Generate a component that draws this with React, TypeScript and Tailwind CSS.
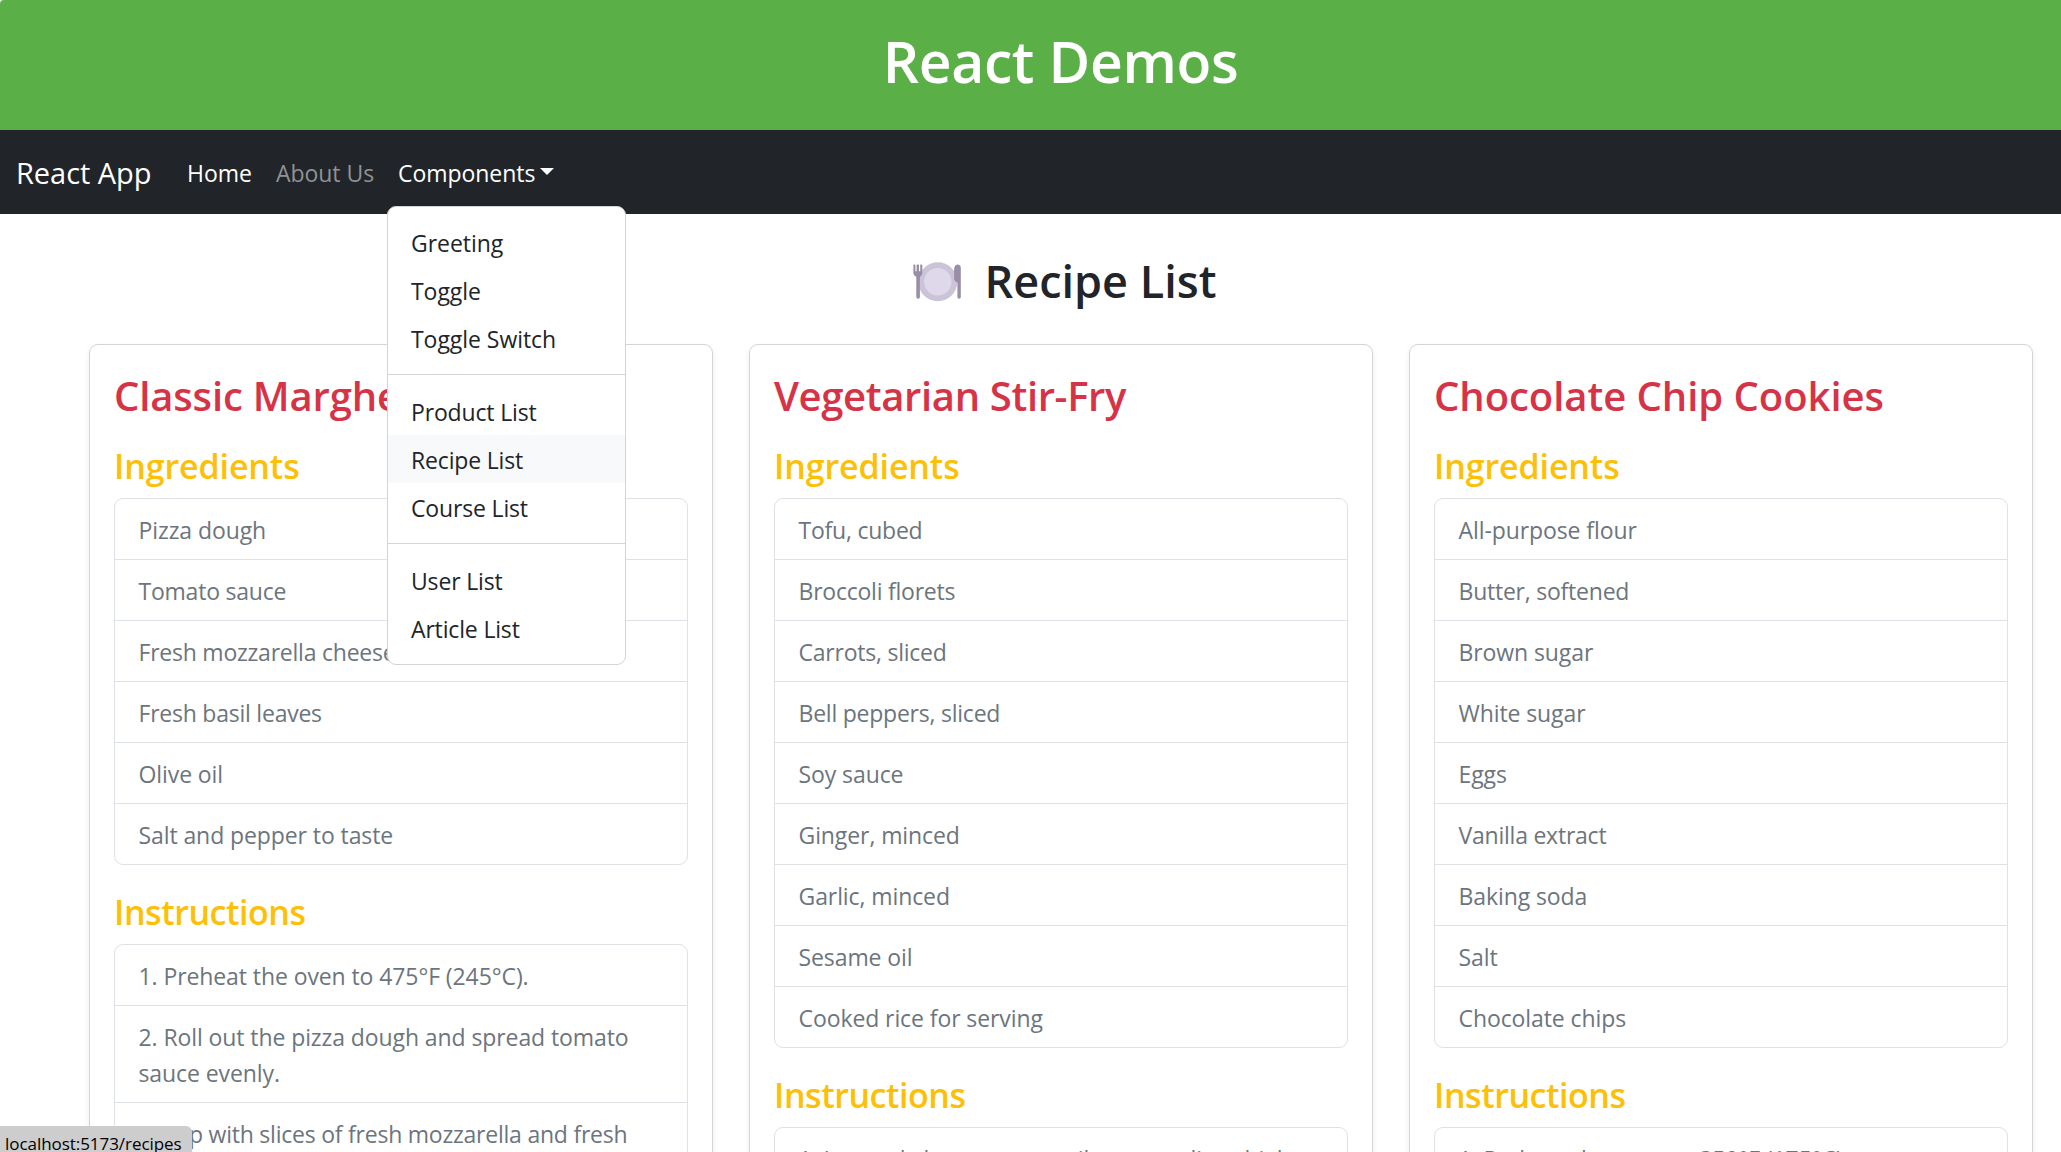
import type { ReactNode } from "react";

type Recipe = {
  title: string;
  titleTracking: string;
  ingredients: string[];
  steps: string[];
};

const recipes: Recipe[] = [
  {
    title: "Classic Margherita Pizza",
    titleTracking: "tracking-[-0.15px]",
    ingredients: [
      "Pizza dough",
      "Tomato sauce",
      "Fresh mozzarella cheese",
      "Fresh basil leaves",
      "Olive oil",
      "Salt and pepper to taste",
    ],
    steps: [
      "Preheat the oven to 475°F (245°C).",
      "Roll out the pizza dough and spread tomato sauce evenly.",
      "Top with slices of fresh mozzarella and fresh basil leaves.",
    ],
  },
  {
    title: "Vegetarian Stir-Fry",
    titleTracking: "tracking-[-0.35px]",
    ingredients: [
      "Tofu, cubed",
      "Broccoli florets",
      "Carrots, sliced",
      "Bell peppers, sliced",
      "Soy sauce",
      "Ginger, minced",
      "Garlic, minced",
      "Sesame oil",
      "Cooked rice for serving",
    ],
    steps: ["In a wok, heat sesame oil over medium-high heat."],
  },
  {
    title: "Chocolate Chip Cookies",
    titleTracking: "tracking-[-0.05px]",
    ingredients: [
      "All-purpose flour",
      "Butter, softened",
      "Brown sugar",
      "White sugar",
      "Eggs",
      "Vanilla extract",
      "Baking soda",
      "Salt",
      "Chocolate chips",
    ],
    steps: ["Preheat the oven to 350°F (175°C)."],
  },
];

const menuGroups: string[][] = [
  ["Greeting", "Toggle", "Toggle Switch"],
  ["Product List", "Recipe List", "Course List"],
  ["User List", "Article List"],
];

// Lines that need slightly closer letters than the rest of the list.
const tightLines = /^(Tomato|Fresh|Tofu|Carrots|Broccoli|Bell|Butter|Vanilla|Top with)/;

function PlateIcon() {
  return (
    <svg width="48" height="40" viewBox="0 0 48 40" className="mt-[6px] shrink-0">
      <circle cx="24.8" cy="19.8" r="19.5" fill="#cbc3d8" />
      <circle cx="24.8" cy="19.8" r="13.7" fill="#dfd8eb" />
      <path
        d="M0.4 3.2q0-.6.6-.6h.8q.6 0 .6.6v6h1.2v-6q0-.6.6-.6h1.2q.6 0 .6.6v6h1.2v-6q0-.6.6-.6h.9q.6 0 .6.6v8.3q0 2-2.4 3.3v20.2q0 1.7-1.8 1.7t-1.8-1.7V14.8q-2.9-1.3-2.9-3.3z"
        fill="#998ea6"
      />
      <path
        d="M44.6 2.6q3.2.2 3.2 3.4v29q0 1.7-1.7 1.7t-1.7-1.7V20.500q-3.300-1.300-3.300-4V8q0-5.200 3.500-5.400z"
        fill="#998ea6"
      />
    </svg>
  );
}

function ListGroup({ children }: { children: ReactNode }) {
  return (
    <ul className="divide-y divide-[#dee2e6] rounded-[9px] border border-[#dee2e6] text-[#6c757d]">
      {children}
    </ul>
  );
}

function ListItem({ text, number }: { text: string; number?: number }) {
  const tracking = tightLines.test(text) ? "tracking-[-0.23px]" : "tracking-[-0.09px]";
  return (
    <li className={`pt-[13px] pr-6 pb-[11px] pl-[23.5px] leading-9 ${tracking}`}>
      {number === undefined ? text : `${number}. ${text}`}
    </li>
  );
}

function RecipeCard({ recipe }: { recipe: Recipe }) {
  return (
    <article className="h-[1400px] rounded-[9px] border border-[#d3d4d5] bg-white p-6 shadow-[0_3px_6px_rgba(0,0,0,0.075)]">
      <h3
        className={`h-[50px] pt-[2px] text-[40px] leading-[50px] font-semibold whitespace-nowrap text-[#d63347] ${recipe.titleTracking}`}
      >
        {recipe.title}
      </h3>
      <h4 className="mt-[24px] mb-3 h-[43px] pt-[2px] text-[34px] leading-[43px] font-semibold tracking-[-0.12px] text-[#fdc006]">
        Ingredients
      </h4>
      <ListGroup>
        {recipe.ingredients.map((item) => (
          <ListItem key={item} text={item} />
        ))}
      </ListGroup>
      <h4 className="mt-6 mb-3 h-[43px] pt-[2px] text-[34px] leading-[43px] font-semibold tracking-[-0.45px] text-[#fdc006]">
        Instructions
      </h4>
      <ListGroup>
        {recipe.steps.map((step, i) => (
          <ListItem key={step} text={step} number={i + 1} />
        ))}
      </ListGroup>
    </article>
  );
}

function ComponentsMenu() {
  return (
    <div className="absolute top-[50px] left-[-11px] z-10 w-[239px] divide-y divide-[#d3d4d5] rounded-[9px] border border-[#d3d4d5] bg-white text-[#212529]">
      {menuGroups.map((group, g) => (
        <ul key={group[0]} className="py-[12px] first:pb-[11px]">
          {group.map((item) => (
            <li
              key={item}
              className={`h-12 px-[23px] leading-[48px] ${g > 0 ? "pt-px tracking-[-0.16px]" : ""} ${item === "Recipe List" ? "bg-[#f8f9fa]" : ""}`}
            >
              {item}
            </li>
          ))}
        </ul>
      ))}
    </div>
  );
}

function Navbar() {
  return (
    <nav className="flex h-[84px] items-center bg-[#212529] text-white">
      <a className="w-[171px] shrink-0 pt-px pl-4 text-[29px] leading-[45px]">React App</a>
      <a className="ml-4 w-[89px] pt-px leading-9">Home</a>
      <a className="w-[122px] pt-px leading-9 text-[#909294]">About Us</a>
      <div className="relative flex h-8 items-center">
        <span className="pt-px leading-9">Components</span>
        <svg width="14" height="7" viewBox="0 0 14 7" className="mb-px ml-[5px]">
          <path d="M0 0h14L7 7z" fill="#fff" />
        </svg>
        <ComponentsMenu />
      </div>
    </nav>
  );
}

export default function App() {
  return (
    <div className="relative h-[1152px] w-full overflow-hidden bg-white font-['Open_Sans','Noto_Sans',sans-serif] text-[23px] tracking-[-0.05px]">
      <header className="h-[130px] rounded-tl-[4px] bg-[#5baf47] pt-[25px] pl-[60px] text-center text-white">
        <h1 className="text-[57px] leading-[72px] font-semibold tracking-[-0.35px]">React Demos</h1>
      </header>
      <Navbar />
      <main className="pr-7 pl-[89px]">
        <h2 className="flex h-[130px] items-center justify-center gap-6 pl-[7px] text-[45px] font-semibold tracking-normal text-[#212529]">
          <PlateIcon />
          <span className="pt-[3px] leading-[58px]">Recipe List</span>
        </h2>
        <div className="grid grid-cols-3 gap-9">
          {recipes.map((recipe) => (
            <RecipeCard key={recipe.title} recipe={recipe} />
          ))}
        </div>
      </main>
      <div className="absolute bottom-0 left-0 h-[26px] w-[192px] rounded-tr-[6px] bg-[#cdcdcd] pt-[6px] pl-[5px] text-[17px] leading-6 text-black">
        localhost:5173/recipes
      </div>
    </div>
  );
}
